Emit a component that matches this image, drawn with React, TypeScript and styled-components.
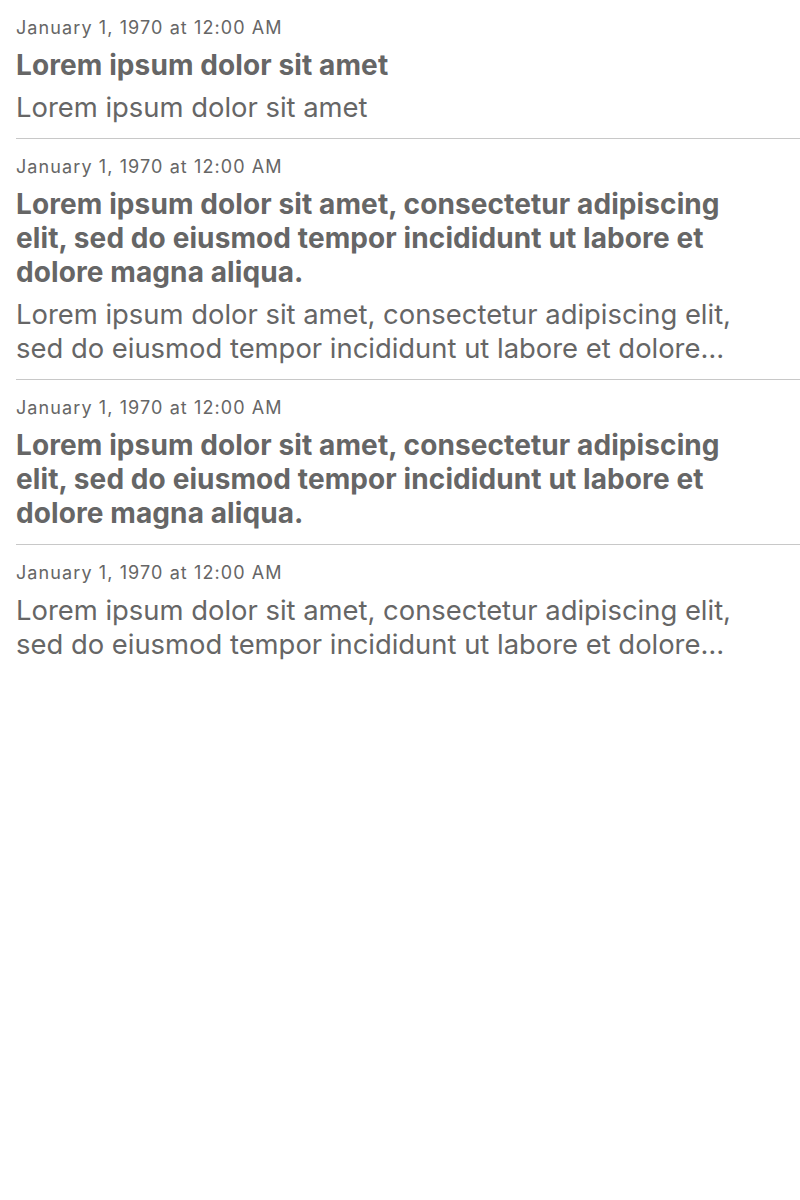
import React from "react";
import styled, { createGlobalStyle } from "styled-components";

const Global = createGlobalStyle`
  html, body { margin: 0; padding: 0; background: #ffffff; }
  body { font-family: Inter, "Noto Sans", sans-serif; color: #666666; -webkit-font-smoothing: antialiased; }
`;

const List = styled.ul`
  list-style: none;
  margin: 0;
  padding: 0 0 0 16px;
`;

const Row = styled.li`
  display: flex;
  flex-direction: column;
  gap: 8px;
  padding: 16px 40px 14px 0;
  border-bottom: 1px solid #c8c8c8;
  &:last-child { border-bottom: none; }
`;

const DateText = styled.div`
  font-size: 18px;
  line-height: 24px;
  letter-spacing: 1.1px;
  color: #666666;
`;

const Title = styled.div`
  font-size: 28px;
  line-height: 34px;
  font-weight: 700;
  letter-spacing: 0.1px;
  color: #666666;
`;

const Body = styled.div`
  font-size: 27.4px;
  line-height: 34px;
  color: #666666;
  display: -webkit-box;
  -webkit-line-clamp: 2;
  -webkit-box-orient: vertical;
  overflow: hidden;
`;

const SHORT = "Lorem ipsum dolor sit amet";
const LONG =
  "Lorem ipsum dolor sit amet, consectetur adipiscing elit, sed do eiusmod tempor incididunt ut labore et dolore magna aliqua.";

const items: { title?: string; body?: string }[] = [
  { title: SHORT, body: SHORT },
  { title: LONG, body: LONG },
  { title: LONG },
  { body: LONG },
];

export default function App() {
  return (
    <>
      <Global />
      <List>
        {items.map((it, i) => (
          <Row key={i}>
            <DateText>January 1, 1970 at 12:00 AM</DateText>
            {it.title && <Title>{it.title}</Title>}
            {it.body && <Body>{it.body}</Body>}
          </Row>
        ))}
      </List>
    </>
  );
}
